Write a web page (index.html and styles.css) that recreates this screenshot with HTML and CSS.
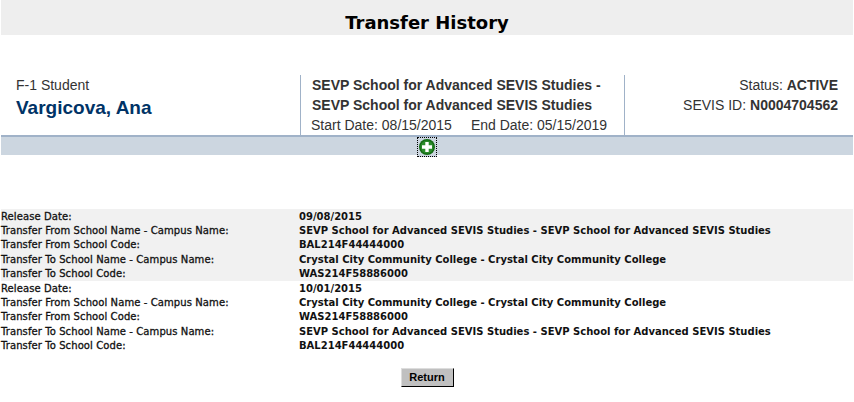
FILE: index.html
```html
<!DOCTYPE html>
<html lang="en">
<head>
    <meta charset="UTF-8">
    <title>Transfer History</title>
    <link rel="stylesheet" href="styles.css">
</head>
<body>
    <h1 class="page-title">Transfer History</h1>

    <div class="student-info">
        <div class="student-name">
            <div class="student-type">F-1 Student</div>
            <div class="name">Vargicova, Ana</div>
        </div>
        <div class="student-school">
            <div class="school-name">SEVP School for Advanced SEVIS Studies -</div>
            <div class="school-name">SEVP School for Advanced SEVIS Studies</div>
            <div class="school-dates"><span>Start Date: 08/15/2015</span><span>End Date: 05/15/2019</span></div>
        </div>
        <div class="student-status">
            <div>Status: <b>ACTIVE</b></div>
            <div>SEVIS ID: <b>N0004704562</b></div>
        </div>
    </div>
    <div class="toggle-bar">
        <a class="toggle" href="#">
            <svg width="16" height="16" viewBox="0 0 16 16">
                <circle cx="8" cy="8" r="8" fill="#156b15"/>
                <circle cx="8" cy="8" r="6.5" fill="#2a8a2a"/>
                <path d="M6.3 3h3.4v3.3h3.3v3.4h-3.3v3.3h-3.4v-3.3h-3.3v-3.4h3.3z" fill="#fff"/>
            </svg>
        </a>
    </div>

    <div class="history">
        <div class="history-group shaded">
            <div class="history-row"><span class="label">Release Date:</span><span class="value">09/08/2015</span></div>
            <div class="history-row"><span class="label">Transfer From School Name - Campus Name:</span><span class="value">SEVP School for Advanced SEVIS Studies - SEVP School for Advanced SEVIS Studies</span></div>
            <div class="history-row"><span class="label">Transfer From School Code:</span><span class="value">BAL214F44444000</span></div>
            <div class="history-row"><span class="label">Transfer To School Name - Campus Name:</span><span class="value">Crystal City Community College - Crystal City Community College</span></div>
            <div class="history-row"><span class="label">Transfer To School Code:</span><span class="value">WAS214F58886000</span></div>
        </div>
        <div class="history-group">
            <div class="history-row"><span class="label">Release Date:</span><span class="value">10/01/2015</span></div>
            <div class="history-row"><span class="label">Transfer From School Name - Campus Name:</span><span class="value">Crystal City Community College - Crystal City Community College</span></div>
            <div class="history-row"><span class="label">Transfer From School Code:</span><span class="value">WAS214F58886000</span></div>
            <div class="history-row"><span class="label">Transfer To School Name - Campus Name:</span><span class="value">SEVP School for Advanced SEVIS Studies - SEVP School for Advanced SEVIS Studies</span></div>
            <div class="history-row"><span class="label">Transfer To School Code:</span><span class="value">BAL214F44444000</span></div>
        </div>
    </div>

    <div class="actions">
        <button class="return-button">Return</button>
    </div>
</body>
</html>
```

FILE: styles.css
```css
body {
    margin: 0;
    padding: 0 1px;
    background: #fff;
    font-family: "Liberation Sans", Arial, sans-serif;
    color: #333;
}
.page-title {
    margin: 0;
    height: 35px;
    line-height: 45px;
    overflow: hidden;
    background: #eee;
    color: #000;
    text-align: center;
    font-family: "DejaVu Sans", Verdana, sans-serif;
    font-size: 18px;
    font-weight: bold;
}
.student-info {
    display: flex;
    height: 60px;
    margin-top: 40px;
    font-size: 14px;
    line-height: 20px;
}
.student-name {
    width: 284px;
    padding-left: 15px;
}
.name {
    margin-top: 1px;
    color: #003366;
    font-size: 19px;
    font-weight: bold;
    line-height: 24px;
}
.student-school {
    width: 312px;
    padding-left: 11px;
    border-left: 1px solid #a0b2c8;
    border-right: 1px solid #a0b2c8;
}
.school-name {
    font-weight: bold;
}
.school-dates {
    margin-left: -1px;
}
.school-dates span + span {
    margin-left: 19px;
}
.student-status {
    flex: 1;
    padding-right: 15px;
    text-align: right;
}
.toggle-bar {
    display: flex;
    justify-content: center;
    height: 18px;
    border-top: 2px solid #a0b2c8;
    background: #ccd6e0;
}
.toggle {
    display: block;
    width: 16px;
    height: 16px;
    padding: 1px;
    border: 1px dotted #000;
    background: #ccd6e0;
}
.history {
    margin-top: 53.6px;
}
.shaded {
    background: #f1f1f1;
}
.history-row {
    display: flex;
    height: 14.4px;
    line-height: 15px;
    font-family: "DejaVu Sans", Verdana, sans-serif;
    font-size: 10px;
    color: #111;
}
.label {
    width: 298px;
    flex: none;
    letter-spacing: 0.09px;
    -webkit-text-stroke: 0.3px #111;
}
.value {
    font-weight: bold;
}
.actions {
    display: flex;
    justify-content: center;
    margin-top: 15.4px;
}
.return-button {
    width: 53px;
    height: 19px;
    padding: 0;
    border: 1px solid;
    border-color: #ddd #000 #000 #ddd;
    background: #c0c0c0;
    color: #000;
    font-family: "Liberation Sans", Arial, sans-serif;
    font-size: 11px;
    font-weight: bold;
}
```
